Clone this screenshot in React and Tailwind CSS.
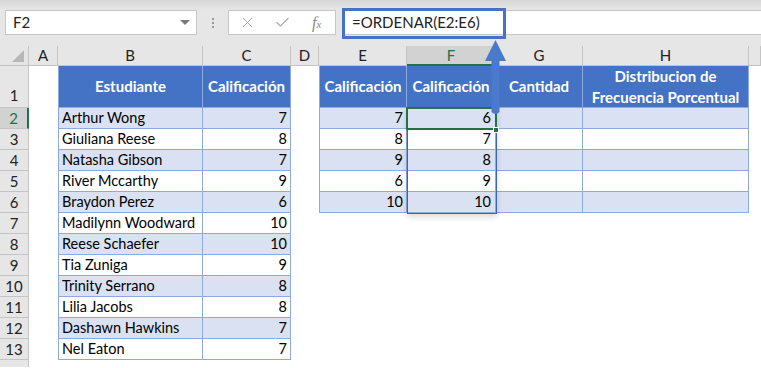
import { X, Check } from 'lucide-react'

const students = [
  ['Arthur Wong', 7],
  ['Giuliana Reese', 8],
  ['Natasha Gibson', 7],
  ['River Mccarthy', 9],
  ['Braydon Perez', 6],
  ['Madilynn Woodward', 10],
  ['Reese Schaefer', 10],
  ['Tia Zuniga', 9],
  ['Trinity Serrano', 8],
  ['Lilia Jacobs', 8],
  ['Dashawn Hawkins', 7],
  ['Nel Eaton', 7],
]

const gradesE = [7, 8, 9, 6, 10]
const gradesF = [6, 7, 8, 9, 10]
const cols = ['A', 'B', 'C', 'D', 'E', 'F', 'G', 'H', '']

function Toolbar() {
  return (
    <div className="h-[46px] flex items-start pt-[10px] bg-gradient-to-b from-[#d6d6d6] from-0% to-[#e6e6e6] to-20%">
      <div className="ml-[5px] w-[192px] h-[25px] bg-white border border-[#c6c6c6] flex items-center justify-between pl-[7px] pr-[6px]">
        <span className="text-[15px] text-[#222]">F2</span>
        <span className="w-0 h-0 border-l-[5px] border-r-[5px] border-t-[5px] border-l-transparent border-r-transparent border-t-[#7a7a7a]" />
      </div>
      <div className="w-[31px] h-[25px] flex flex-col items-center justify-center gap-[2px]">
        <span className="w-[2px] h-[2px] bg-[#9a9a9a]" />
        <span className="w-[2px] h-[2px] bg-[#9a9a9a]" />
        <span className="w-[2px] h-[2px] bg-[#9a9a9a]" />
      </div>
      <div className="w-[108px] h-[25px] bg-white border border-[#c6c6c6] flex items-center pl-[10px] gap-[18px] text-[#a8a8a8]">
        <X className="w-[17px] h-[17px]" strokeWidth={1.4} />
        <Check className="w-[17px] h-[17px]" strokeWidth={1.6} />
        <span className="font-['Liberation_Serif',serif] italic text-[16px] text-[#8a8a8a] leading-none ml-[3px]">
          f<span className="text-[11px]">x</span>
        </span>
      </div>
      <div className="relative ml-[6px] flex-1 h-[25px] bg-white border-y border-[#c6c6c6] flex items-center pl-[10px]">
        <span className="text-[15px] text-[#222]">=ORDENAR(E2:E6)</span>
        <div className="absolute left-0 -top-[3px] w-[164px] h-[31px] border-[3px] border-[#4472C4]" />
      </div>
    </div>
  )
}

function ColHeaders() {
  return (
    <>
      <div className="bg-[#e6e6e6] border-r border-b border-[#c4c4c4] relative">
        <svg className="absolute right-[4px] bottom-[3px]" width="12" height="12" viewBox="0 0 12 12">
          <polygon points="12,0 12,12 0,12" fill="#b7b7b7" />
        </svg>
      </div>
      {cols.map((c, i) =>
        c === 'F' ? (
          <div key={i} className="bg-[#d2d2d2] border-r border-[#c4c4c4] border-b-2 border-b-[#217346] flex items-center justify-center text-[15px] text-[#217346]">
            {c}
          </div>
        ) : (
          <div key={i} className="bg-[#e6e6e6] border-r border-b border-[#c4c4c4] flex items-center justify-center text-[15px] text-[#222]">
            {c}
          </div>
        )
      )}
    </>
  )
}

function RowHead({ n, tall }) {
  if (n === 2) {
    return (
      <div className="bg-[#d2d2d2] border-b border-[#c4c4c4] border-r-2 border-r-[#217346] flex items-center justify-center text-[15px] text-[#217346]">
        {n}
      </div>
    )
  }
  return (
    <div className={`bg-[#e6e6e6] border-r border-b border-[#c4c4c4] flex justify-center text-[15px] text-[#222] ${tall ? 'items-end pb-[1px]' : 'items-center'}`}>
      {n}
    </div>
  )
}

const head = 'bg-[#4472C4] text-white font-bold text-[15px] flex items-center justify-center text-center leading-[21px] border-r border-b border-[#8EA9DB]'
const body = 'border-r border-b border-[#8EA9DB] flex items-center text-[14.5px] text-black'

export default function App() {
  return (
    <div className="relative w-[761px] h-[368px] overflow-hidden bg-white font-['Lato',sans-serif]">
      <Toolbar />
      <div className="grid grid-cols-[29px_29px_145px_88px_28px_88px_89px_87px_166px_1fr] grid-rows-[20px_42px_repeat(12,21px)_7px]">
        <ColHeaders />

        {/* row 1: headers */}
        <RowHead n={1} tall />
        <div />
        <div className={`${head} border-l`}>Estudiante</div>
        <div className={head}>Calificación</div>
        <div />
        <div className={`${head} border-l`}>Calificación</div>
        <div className={head}>Calificación</div>
        <div className={head}>Cantidad</div>
        <div className={head}>Distribucion de<br />Frecuencia Porcentual</div>
        <div />

        {students.map(([name, grade], i) => {
          const band = i % 2 === 0 ? 'bg-[#D9E1F2]' : 'bg-white'
          const inSecond = i < 5
          return (
            <div key={name} className="contents">
              <RowHead n={i + 2} />
              <div />
              <div className={`${body} ${band} border-l pl-[3px]`}>{name}</div>
              <div className={`${body} ${band} justify-end pr-[3px]`}>{grade}</div>
              <div />
              {inSecond ? (
                <>
                  <div className={`${body} ${band} border-l justify-end pr-[3px]`}>{gradesE[i]}</div>
                  <div className={`${body} ${band} justify-end pr-[4px]`}>{gradesF[i]}</div>
                  <div className={`${body} ${band}`} />
                  <div className={`${body} ${band}`} />
                </>
              ) : (
                <>
                  <div />
                  <div />
                  <div />
                  <div />
                </>
              )}
              <div />
            </div>
          )
        })}
        {/* top edge of row 14 */}
        <div className="bg-[#e6e6e6] border-r border-[#c4c4c4]" />
      </div>

      {/* spill range F2:F6 */}
      <div className="absolute left-[407px] top-[108px] w-[90px] h-[106px] border border-[#3b64b3] shadow-[0_3px_6px_rgba(0,0,0,0.15)] pointer-events-none" />
      {/* active cell F2 */}
      <div className="absolute left-[406px] top-[107px] w-[91px] h-[23px] border-2 border-[#217346] pointer-events-none" />
      <div className="absolute left-[493px] top-[127px] w-[6px] h-[6px] bg-[#217346] border border-white pointer-events-none" />

      {/* callout arrow */}
      <svg className="absolute left-[484px] top-[40px] pointer-events-none" width="24" height="78" viewBox="0 0 24 78">
        <path d="M7.5 18 L7.5 72 Q11.5 76 15.5 72 L15.5 18 Z" fill="#4a7bcb" />
        <polygon points="11.5,0 1,21 22,21" fill="#4a7bcb" />
      </svg>
    </div>
  )
}
